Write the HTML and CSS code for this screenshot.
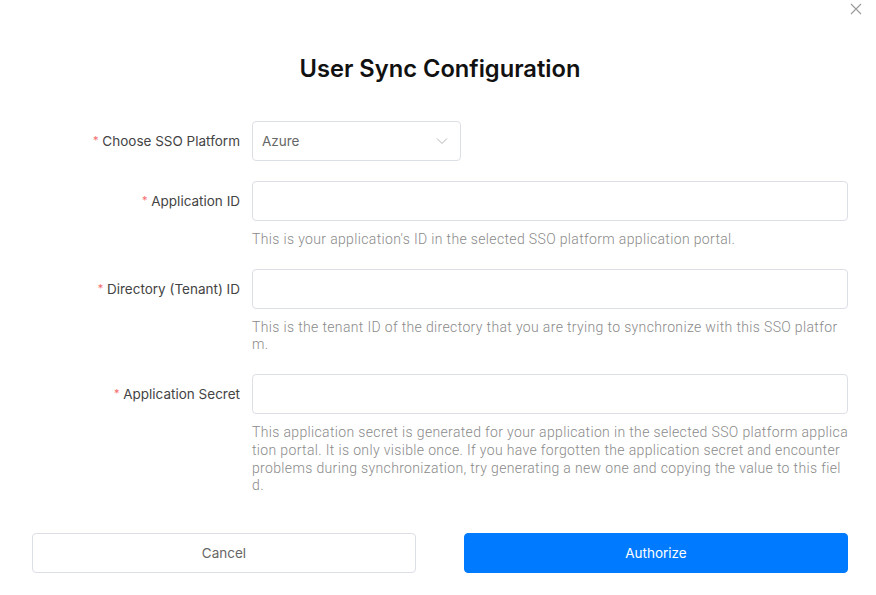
FILE: index.html
```html
<!DOCTYPE html>
<html>
<head>
<meta charset="utf-8">
<link rel="stylesheet" href="styles.css">
</head>
<body>
<div class="dialog">
  <button class="close" aria-label="Close">
    <svg width="12" height="12" viewBox="0 0 12 12"><path d="M1 1L11 11M11 1L1 11" stroke="#9a9a9a" stroke-width="1.1" fill="none"/></svg>
  </button>
  <h1 class="title">User Sync Configuration</h1>
  <div class="form">
    <div class="row">
      <label class="label"><span class="req">*</span> Choose SSO Platform</label>
      <div class="field">
        <div class="select">
          <span>Azure</span>
          <svg width="12" height="8" viewBox="0 0 12 8"><path d="M1 1.5L6 6.5L11 1.5" stroke="#b5b5b5" stroke-width="1" fill="none"/></svg>
        </div>
      </div>
    </div>
    <div class="row">
      <label class="label"><span class="req">*</span> Application ID</label>
      <div class="field">
        <div class="input"></div>
        <p class="help">This is your application's ID in the selected SSO platform application portal.</p>
      </div>
    </div>
    <div class="row">
      <label class="label"><span class="req">*</span> Directory (Tenant) ID</label>
      <div class="field">
        <div class="input"></div>
        <p class="help">This is the tenant ID of the directory that you are trying to synchronize with this SSO platform.</p>
      </div>
    </div>
    <div class="row">
      <label class="label"><span class="req">*</span> Application Secret</label>
      <div class="field">
        <div class="input"></div>
        <p class="help">This application secret is generated for your application in the selected SSO platform application portal. It is only visible once. If you have forgotten the application secret and encounter problems during synchronization, try generating a new one and copying the value to this field.</p>
      </div>
    </div>
  </div>
  <div class="actions">
    <button class="btn cancel">Cancel</button>
    <button class="btn primary">Authorize</button>
  </div>
</div>
</body>
</html>
```
FILE: styles.css
```css
* { box-sizing: border-box; }
html, body { margin: 0; padding: 0; background: #fff; }
body { font-family: Inter, "Noto Sans", sans-serif; color: #333; }
.dialog { position: relative; width: 876px; height: 595px; padding: 0 28px 0 32px; }
.close { position: absolute; top: 3px; right: 14px; width: 12px; height: 12px; padding: 0; border: 0; background: none; display: flex; }
.title { margin: 0; padding-top: 54px; height: 121px; text-align: center; font-size: 23.7px; font-weight: 600; color: #111; line-height: 30px; }
.form { display: flex; flex-direction: column; gap: 20px; }
.row { display: flex; align-items: flex-start; }
.label { width: 220px; height: 40px; flex: none; text-align: right; padding-right: 12px; font-size: 13.5px; line-height: 40px; color: #444; white-space: nowrap; }
.req { color: #f56c6c; font-size: 11px; line-height: 1; position: relative; top: -2px; }
.field { flex: 1; min-width: 0; }
.select { width: 209px; height: 40px; border: 1px solid #dcdfe6; border-radius: 4px; display: flex; align-items: center; justify-content: space-between; padding: 0 12px 0 9px; font-size: 13.5px; color: #666; }
.input { height: 40px; border: 1px solid #dcdfe6; border-radius: 4px; }
.help { margin: 10px 0 0; font-family: Roboto, sans-serif; font-weight: 300; font-size: 14px; letter-spacing: 0.35px; line-height: 17.7px; color: #8a8a8a; word-break: break-all; }
.actions { display: flex; gap: 48px; margin-top: 37.8px; }
.btn { flex: 1; height: 40px; border-radius: 4px; font-family: Inter, sans-serif; font-size: 13.5px; cursor: pointer; }
.cancel { background: #fff; border: 1px solid #dcdfe6; color: #666; }
.primary { background: #007bff; border: 1px solid #007bff; color: #fff; }
```
